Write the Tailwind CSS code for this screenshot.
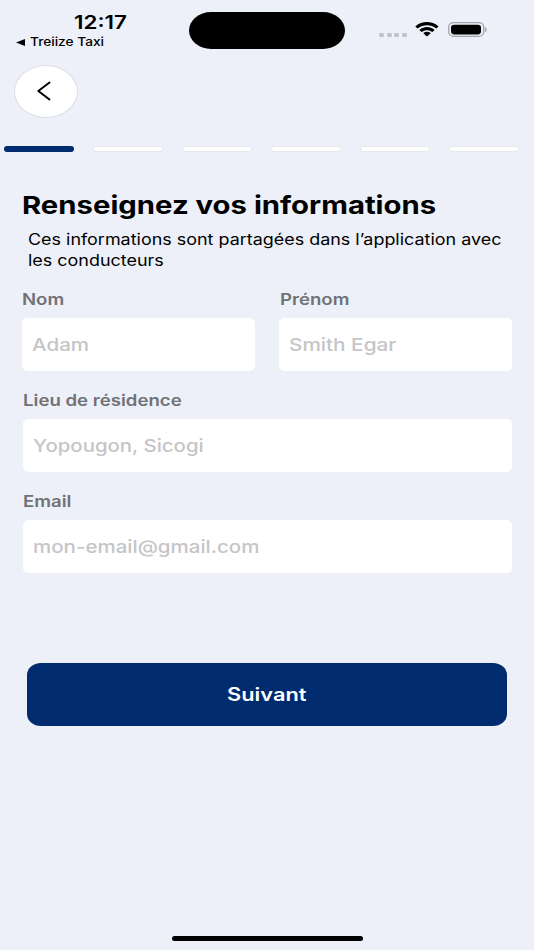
<!DOCTYPE html>
<html lang="fr">

<head>
    <meta charset="UTF-8">
    <meta name="viewport" content="width=device-width, initial-scale=1.0">
    <title>Treiize Taxi</title>
    <script src="https://cdn.jsdelivr.net/npm/@tailwindcss/browser@4"></script>
</head>

<body class="bg-[#edf0f8] h-[950px] flex flex-col overflow-hidden text-black font-['Inter','Liberation_Sans',sans-serif]">

    <!-- Status bar -->
    <header class="h-[65px] flex shrink-0">
        <div class="w-[189px] pt-3">
            <p class="ml-[74px] text-[18.5px] leading-5 font-semibold whitespace-nowrap origin-left scale-x-[1.21]">12:17</p>
            <div class="flex items-center pl-4 mt-[2px] h-4">
                <svg class="w-[9px] h-[7px] mr-[5px] shrink-0" viewBox="0 0 9 7"><path d="M9 0v7L0 3.5z" /></svg>
                <span class="text-[11.8px] leading-4 font-medium whitespace-nowrap origin-left scale-x-[1.16]">Treiize Taxi</span>
            </div>
        </div>
        <div class="w-[156px] h-[37px] mt-3 bg-black rounded-[22px/18.5px]"></div>
        <div class="flex pl-[34px] pt-[22px]">
            <div class="flex gap-[2.6px] pt-[11px]">
                <i class="w-[5px] h-1 rounded-[1.5px] bg-[#c1c3c9]"></i>
                <i class="w-[5px] h-1 rounded-[1.5px] bg-[#c1c3c9]"></i>
                <i class="w-[5px] h-1 rounded-[1.5px] bg-[#c1c3c9]"></i>
                <i class="w-[5px] h-1 rounded-[1.5px] bg-[#c1c3c9]"></i>
            </div>
            <svg class="w-6 h-[15px] ml-[8px]" viewBox="0 0 17 12.3" preserveAspectRatio="none">
                <path d="M8.5 2.6c2.3 0 4.6.9 6.3 2.6.1.1.3.1.5 0l1.2-1.3c.1-.1.1-.3 0-.5-4.5-4.4-11.6-4.4-16.1 0-.1.2-.1.4 0 .5l1.2 1.3c.2.1.4.1.5 0C3.9 3.5 6.2 2.6 8.5 2.6zM8.5 6.7c1.3 0 2.5.5 3.5 1.3.1.2.3.2.5 0l1.2-1.2c.2-.2.2-.4 0-.5-2.9-2.8-7.5-2.8-10.4 0-.2.1-.2.3 0 .5l1.2 1.2c.2.2.4.2.5 0 1-.8 2.2-1.3 3.5-1.3zM10.900 9.400c.1-.1.1-.3 0-.5-1.400-1.200-3.400-1.200-4.800 0-.1.2-.1.4 0 .5l2.100 2.200c.2.1.4.1.5 0z" />
            </svg>
            <svg class="w-10 h-[15px] ml-[9px]" viewBox="0 0 40 15">
                <rect x=".7" y=".7" width="35" height="13.6" rx="5" ry="4.3" fill="none" stroke="#a2a4aa" stroke-width="1.3" />
                <rect x="3" y="2.7" width="30" height="9.7" rx="3.3" ry="2.8" />
                <path d="M37 5.2c2.2.6 2.2 4.2 0 4.8z" fill="#a2a4aa" />
            </svg>
        </div>
    </header>

    <button class="ml-[14px] w-16 h-[53px] shrink-0 rounded-[50%] bg-white border-[1.5px] border-[#dcdee4] flex items-center justify-center">
        <svg class="w-4 h-5 mr-[4px] mb-px" viewBox="0 0 16 20" fill="none" stroke="#000" stroke-width="2" stroke-linecap="round" stroke-linejoin="round">
            <path d="M13.5 1.500 2.300 10l11.200 8.500" />
        </svg>
    </button>

    <!-- Steps -->
    <div class="flex gap-[19.1px] ml-1 mt-7 shrink-0">
        <div class="w-[70px] h-[6px] rounded-[3px] bg-[#002b6f]"></div>
        <div class="w-[70px] h-[6px] rounded-[3px] bg-white border border-[#e6e8ee]"></div>
        <div class="w-[70px] h-[6px] rounded-[3px] bg-white border border-[#e6e8ee]"></div>
        <div class="w-[70px] h-[6px] rounded-[3px] bg-white border border-[#e6e8ee]"></div>
        <div class="w-[70px] h-[6px] rounded-[3px] bg-white border border-[#e6e8ee]"></div>
        <div class="w-[70px] h-[6px] rounded-[3px] bg-white border border-[#e6e8ee]"></div>
    </div>

    <main class="flex flex-col px-[22px] pt-[38px]">
        <h1 class="w-max text-[24.5px] leading-[30px] font-bold whitespace-nowrap origin-left scale-x-[1.195]">Renseignez vos informations</h1>
        <p class="w-max ml-[6px] mt-[10px] text-[15.5px] leading-[20.5px] whitespace-nowrap origin-left scale-x-[1.157]">Ces informations sont partagées dans l’application avec<br>les conducteurs</p>

        <div class="flex gap-[24px] mt-[19px]">
            <div class="w-[233px]">
                <label for="nom" class="block w-max text-[15.5px] leading-5 font-semibold text-[#717275] origin-left scale-x-[1.2]">Nom</label>
                <div class="mt-[8px] h-[53px] rounded-[6px/5px] bg-white overflow-hidden pl-[10px]">
                    <input id="nom" class="block w-[180px] h-[53px] text-[17.5px] font-medium outline-none placeholder:text-[#c5c5c7] origin-left scale-x-[1.175]" placeholder="Adam">
                </div>
            </div>
            <div class="w-[233px]">
                <label for="prenom" class="block w-max ml-px text-[15.5px] leading-5 font-semibold text-[#717275] origin-left scale-x-[1.2]">Prénom</label>
                <div class="mt-[8px] h-[53px] rounded-[6px/5px] bg-white overflow-hidden pl-[10px]">
                    <input id="prenom" class="block w-[180px] h-[53px] text-[17.5px] font-medium outline-none placeholder:text-[#c5c5c7] origin-left scale-x-[1.185]" placeholder="Smith Egar">
                </div>
            </div>
        </div>

        <div class="mt-[20px] ml-px">
            <label for="lieu" class="block w-max text-[15.5px] leading-5 font-semibold text-[#717275] origin-left scale-x-[1.2]">Lieu de résidence</label>
            <div class="mt-[8px] h-[53px] rounded-[6px/5px] bg-white overflow-hidden pl-[10px]">
                <input id="lieu" class="block w-[390px] h-[53px] text-[17.5px] font-medium outline-none placeholder:text-[#c5c5c7] origin-left scale-x-[1.165]" placeholder="Yopougon, Sicogi">
            </div>
        </div>

        <div class="mt-[20px] ml-px">
            <label for="email" class="block w-max text-[15.5px] leading-5 font-semibold text-[#717275] origin-left scale-x-[1.2]">Email</label>
            <div class="mt-[8px] h-[53px] rounded-[6px/5px] bg-white overflow-hidden pl-[10px]">
                <input id="email" type="email" class="block w-[390px] h-[53px] text-[17.5px] font-medium outline-none placeholder:text-[#c5c5c7] origin-left scale-x-[1.172]" placeholder="mon-email@gmail.com">
            </div>
        </div>

        <button class="ml-[5px] mt-[90px] w-[480px] h-[63px] rounded-[14px/12px] bg-[#002b6f] text-white text-[18px] font-semibold flex items-center justify-center">
            <span class="scale-x-[1.21]">Suivant</span>
        </button>
    </main>

    <!-- Home indicator -->
    <div class="w-[191px] h-[5px] rounded-[3px] bg-black mx-auto mt-auto mb-[9px]"></div>
</body>

</html>
